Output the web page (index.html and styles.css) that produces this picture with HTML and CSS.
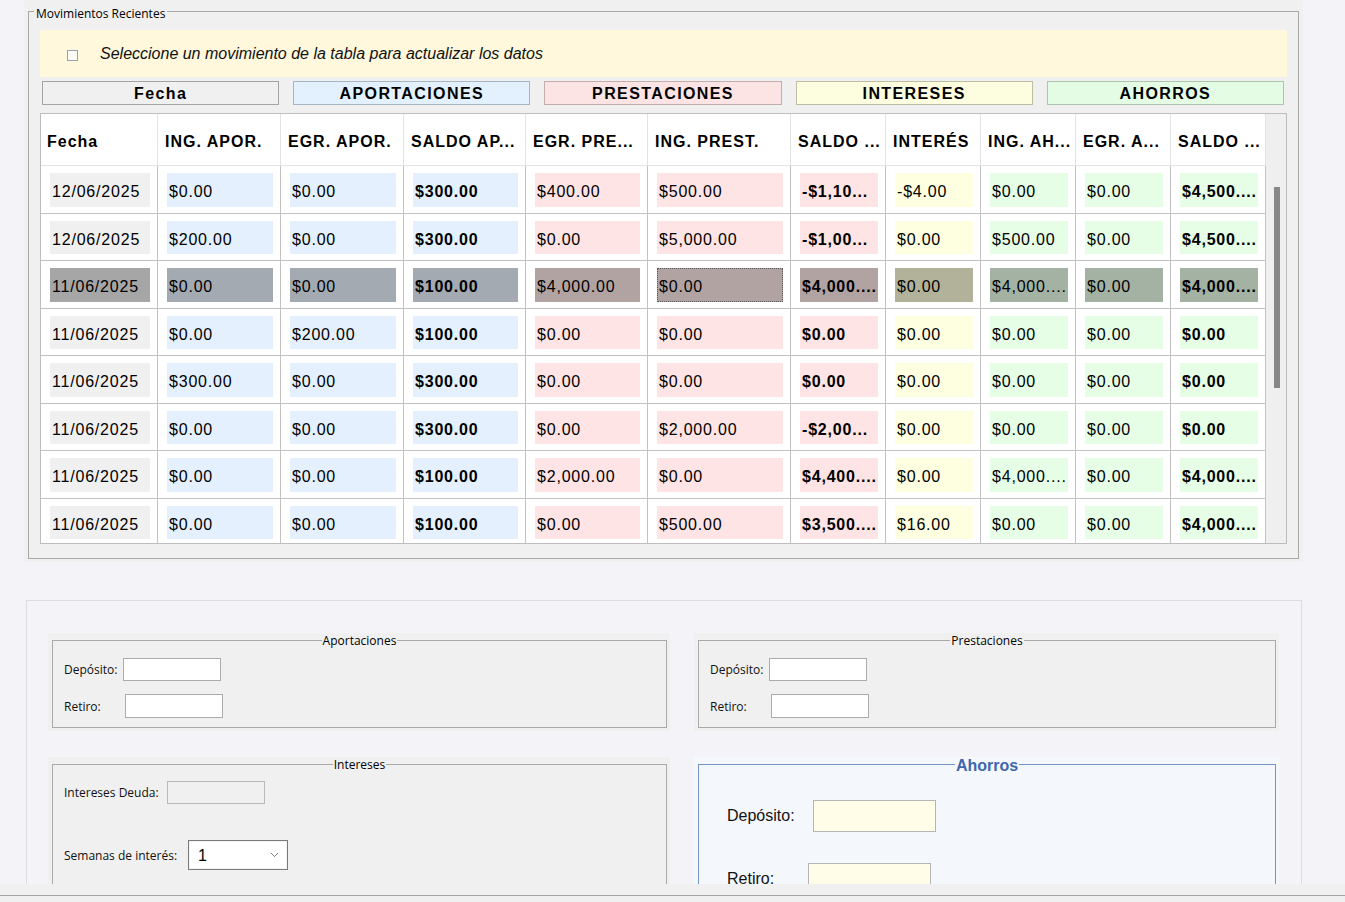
FILE: index.html
```html
<!DOCTYPE html>
<html lang="es">
<head>
<meta charset="utf-8">
<title>Movimientos</title>
<link rel="stylesheet" href="styles.css">
</head>
<body>
<div class="page">
  <section class="recent-panel">
    <fieldset class="recent">
      <legend class="recent-legend">Movimientos Recientes</legend>
      <div class="info">
        <span class="chk"></span>
        <span class="info-text">Seleccione un movimiento de la tabla para actualizar los datos</span>
      </div>
      <div class="groups">
        <div class="grp grp-f">Fecha</div>
        <div class="grp grp-a">APORTACIONES</div>
        <div class="grp grp-p">PRESTACIONES</div>
        <div class="grp grp-i">INTERESES</div>
        <div class="grp grp-h">AHORROS</div>
      </div>
      <div class="table-wrap">
        <div class="tscroll">
          <table class="grid-table">
            <colgroup>
              <col class="w117"><col class="w123"><col class="w123"><col class="w122"><col class="w122"><col class="w143"><col class="w95"><col class="w95"><col class="w95"><col class="w95"><col class="w95">
            </colgroup>
            <thead>
              <tr>
                <th>Fecha</th><th>ING. APOR.</th><th>EGR. APOR.</th><th>SALDO AP...</th><th>EGR. PRE...</th><th>ING. PREST.</th><th>SALDO ...</th><th>INTERÉS</th><th>ING. AH...</th><th>EGR. A...</th><th>SALDO ...</th>
              </tr>
            </thead>
            <tbody>
              <tr>
                <td><div class="c f">12/06/2025</div></td><td><div class="c a">$0.00</div></td><td><div class="c a">$0.00</div></td><td><div class="c a b">$300.00</div></td><td><div class="c p">$400.00</div></td><td><div class="c p">$500.00</div></td><td><div class="c p b">-$1,10...</div></td><td><div class="c i">-$4.00</div></td><td><div class="c h">$0.00</div></td><td><div class="c h">$0.00</div></td><td><div class="c h b">$4,500....</div></td>
              </tr>
              <tr>
                <td><div class="c f">12/06/2025</div></td><td><div class="c a">$200.00</div></td><td><div class="c a">$0.00</div></td><td><div class="c a b">$300.00</div></td><td><div class="c p">$0.00</div></td><td><div class="c p">$5,000.00</div></td><td><div class="c p b">-$1,00...</div></td><td><div class="c i">$0.00</div></td><td><div class="c h">$500.00</div></td><td><div class="c h">$0.00</div></td><td><div class="c h b">$4,500....</div></td>
              </tr>
              <tr class="sel">
                <td><div class="c f">11/06/2025</div></td><td><div class="c a">$0.00</div></td><td><div class="c a">$0.00</div></td><td><div class="c a b">$100.00</div></td><td><div class="c p">$4,000.00</div></td><td><div class="c p focus">$0.00</div></td><td><div class="c p b">$4,000....</div></td><td><div class="c i">$0.00</div></td><td><div class="c h">$4,000....</div></td><td><div class="c h">$0.00</div></td><td><div class="c h b">$4,000....</div></td>
              </tr>
              <tr>
                <td><div class="c f">11/06/2025</div></td><td><div class="c a">$0.00</div></td><td><div class="c a">$200.00</div></td><td><div class="c a b">$100.00</div></td><td><div class="c p">$0.00</div></td><td><div class="c p">$0.00</div></td><td><div class="c p b">$0.00</div></td><td><div class="c i">$0.00</div></td><td><div class="c h">$0.00</div></td><td><div class="c h">$0.00</div></td><td><div class="c h b">$0.00</div></td>
              </tr>
              <tr>
                <td><div class="c f">11/06/2025</div></td><td><div class="c a">$300.00</div></td><td><div class="c a">$0.00</div></td><td><div class="c a b">$300.00</div></td><td><div class="c p">$0.00</div></td><td><div class="c p">$0.00</div></td><td><div class="c p b">$0.00</div></td><td><div class="c i">$0.00</div></td><td><div class="c h">$0.00</div></td><td><div class="c h">$0.00</div></td><td><div class="c h b">$0.00</div></td>
              </tr>
              <tr>
                <td><div class="c f">11/06/2025</div></td><td><div class="c a">$0.00</div></td><td><div class="c a">$0.00</div></td><td><div class="c a b">$300.00</div></td><td><div class="c p">$0.00</div></td><td><div class="c p">$2,000.00</div></td><td><div class="c p b">-$2,00...</div></td><td><div class="c i">$0.00</div></td><td><div class="c h">$0.00</div></td><td><div class="c h">$0.00</div></td><td><div class="c h b">$0.00</div></td>
              </tr>
              <tr>
                <td><div class="c f">11/06/2025</div></td><td><div class="c a">$0.00</div></td><td><div class="c a">$0.00</div></td><td><div class="c a b">$100.00</div></td><td><div class="c p">$2,000.00</div></td><td><div class="c p">$0.00</div></td><td><div class="c p b">$4,400....</div></td><td><div class="c i">$0.00</div></td><td><div class="c h">$4,000....</div></td><td><div class="c h">$0.00</div></td><td><div class="c h b">$4,000....</div></td>
              </tr>
              <tr>
                <td><div class="c f">11/06/2025</div></td><td><div class="c a">$0.00</div></td><td><div class="c a">$0.00</div></td><td><div class="c a b">$100.00</div></td><td><div class="c p">$0.00</div></td><td><div class="c p">$500.00</div></td><td><div class="c p b">$3,500....</div></td><td><div class="c i">$16.00</div></td><td><div class="c h">$0.00</div></td><td><div class="c h">$0.00</div></td><td><div class="c h b">$4,000....</div></td>
              </tr>
            </tbody>
          </table>
        </div>
        <div class="vbar"><div class="thumb"></div></div>
      </div>
    </fieldset>
  </section>

  <section class="forms">
    <div class="forms-grid">
      <div class="box">
        <fieldset class="fs fs-row1">
          <legend class="fs-legend">Aportaciones</legend>
          <div class="frow">
            <label class="lbl lbl-dep">Depósito:</label>
            <span class="inp inp-h23"></span>
          </div>
          <div class="frow frow-gap13">
            <label class="lbl lbl-ret">Retiro:</label>
            <span class="inp inp-h24"></span>
          </div>
        </fieldset>
      </div>
      <div class="box">
        <fieldset class="fs fs-row1">
          <legend class="fs-legend">Prestaciones</legend>
          <div class="frow">
            <label class="lbl lbl-dep">Depósito:</label>
            <span class="inp inp-h23"></span>
          </div>
          <div class="frow frow-gap13">
            <label class="lbl lbl-ret">Retiro:</label>
            <span class="inp inp-h24"></span>
          </div>
        </fieldset>
      </div>
      <div class="box">
        <fieldset class="fs fs-int">
          <legend class="fs-legend">Intereses</legend>
          <div class="frow">
            <label class="lbl lbl-deuda">Intereses Deuda:</label>
            <span class="inp inp-h23 inp-disabled"></span>
          </div>
          <div class="frow frow-gap36">
            <label class="lbl lbl-sem">Semanas de interés:</label>
            <div class="select">
              <span class="select-val">1</span>
              <svg class="chev" width="9" height="6" viewBox="0 0 9 6"><path d="M0.8 0.8 L4.5 4.6 L8.2 0.8" fill="none" stroke="#7a7a7a" stroke-width="1"/></svg>
            </div>
          </div>
        </fieldset>
      </div>
      <div class="box box-blue">
        <fieldset class="fs fs-blue">
          <legend class="fs-legend legend-blue">Ahorros</legend>
          <div class="blue-body">
            <div class="frow">
              <label class="lbl-big lbl-big-dep">Depósito:</label>
              <span class="inp-big"></span>
            </div>
            <div class="frow frow-gap31">
              <label class="lbl-big lbl-big-ret">Retiro:</label>
              <span class="inp-big"></span>
            </div>
          </div>
        </fieldset>
      </div>
    </div>
  </section>

  <div class="statusbar"><div class="statusbar-line"></div></div>
</div>
</body>
</html>
```
FILE: styles.css
```css
* { box-sizing: border-box; }
html, body { margin: 0; padding: 0; }
body {
  background: #f4f4f8;
  font-family: "Liberation Sans", Arial, sans-serif;
  color: #000;
}
.page {
  width: 1345px;
  height: 902px;
  display: flex;
  flex-direction: column;
  overflow: hidden;
}

/* ---------- top panel ---------- */
.recent-panel {
  flex: none;
  margin-left: 24px;
  width: 1279px;
  height: 562px;
  background: #f0f0f0;
  padding: 2px 4px 0 4px;
}
.recent {
  margin: 0;
  height: 557px;
  border: 1px solid #a8a8a8;
  padding: 9px 11px 0 11px;
  min-width: 0;
}
.recent-legend {
  font-family: "Open Sans", "Liberation Sans", sans-serif;
  font-size: 12px;
  line-height: 14px;
  padding: 5px 2px 0 2px;
  margin-left: -6px;
  color: #000;
}
.info {
  height: 47px;
  background: #fff8dc;
  display: flex;
  align-items: center;
  padding-left: 27px;
}
.chk {
  width: 11px;
  height: 11px;
  border: 1px solid #97a3b4;
  background: #fbfaf4;
  margin-top: 3px;
}
.info-text {
  margin-left: 22px;
  font-style: italic;
  font-size: 16px;
  color: #111;
}
.groups {
  margin-top: 4px;
  display: grid;
  grid-template-columns: repeat(5, 1fr);
  column-gap: 14px;
  padding: 0 3px 0 2px;
}
.grp {
  height: 24px;
  border: 1px solid #a0a0a0;
  text-align: center;
  font-weight: bold;
  font-size: 16px;
  letter-spacing: 1.4px;
  line-height: 23px;
}
.grp-f { background: #f0f0f0; border-color: #a4a4a4; }
.grp-a { background: #e3f0fd; border-color: #a6b5c4; }
.grp-p { background: #fde4e4; border-color: #c4adad; }
.grp-i { background: #fdfddf; border-color: #bdbda2; }
.grp-h { background: #e4fce4; border-color: #adc4ad; }

/* ---------- table ---------- */
.table-wrap {
  margin-top: 8px;
  height: 431px;
  border: 1px solid #bdbdbd;
  display: flex;
  background: #fff;
}
.tscroll {
  flex: none;
  width: 1225px;
  overflow: hidden;
}
.vbar {
  flex: 1;
  background: #efefef;
  padding: 73px 0 0 8px;
}
.thumb {
  width: 6px;
  height: 201px;
  background: #878787;
}
.grid-table {
  table-layout: fixed;
  width: 1225px;
  border-collapse: separate;
  border-spacing: 0;
}
.w117 { width: 117px; }
.w123 { width: 123px; }
.w122 { width: 122px; }
.w143 { width: 143px; }
.w95 { width: 95px; }
.grid-table th {
  height: 52px;
  padding: 4px 0 0 7px;
  text-align: left;
  font-weight: bold;
  font-size: 16px;
  letter-spacing: 1px;
  white-space: nowrap;
  overflow: hidden;
  background: #fff;
  border-right: 1px solid #e3e3e3;
  border-bottom: 1px solid #e3e3e3;
}
.grid-table th:first-child { padding-left: 6px; }
.grid-table td {
  padding: 7px 7px 6px 9px;
  border-right: 1px solid #c2c2c2;
  border-bottom: 1px solid #c2c2c2;
  background: #fff;
}
.c {
  height: 33.5px;
  padding-top: 4px;
  line-height: 29.5px;
  padding-left: 2px;
  font-size: 16px;
  letter-spacing: 0.8px;
  white-space: nowrap;
  overflow: hidden;
}
.c.b { font-weight: bold; }
.f { background: #f0f0f0; }
.a { background: #e4f0fe; }
.p { background: #fee4e4; }
.i { background: #fefee0; }
.h { background: #e6fee6; }
.sel .f { background: #a6a6a6; }
.sel .a { background: #a3aab2; }
.sel .p { background: #b2a3a3; }
.sel .i { background: #b2b29a; }
.sel .h { background: #a3b2a3; }
.focus { border: 1px dotted #555; padding-left: 1px; padding-top: 3px; }

/* ---------- forms ---------- */
.forms {
  flex: 1;
  min-height: 0;
  overflow: hidden;
  margin: 38px 0 0 26px;
  width: 1276px;
  border: 1px solid #dcdce3;
  border-bottom: none;
  padding: 32px 22px 0 21px;
}
.forms-grid {
  display: grid;
  grid-template-columns: 622px 585px;
  grid-template-rows: 98px auto;
  column-gap: 24px;
  row-gap: 26px;
}
.box {
  background: #f0f0f0;
  padding: 0 3px 3px 4px;
}
.box-blue { background: #f4f8fd; }
.fs {
  margin: 0;
  min-width: 0;
  border: 1px solid #a9a9a9;
  padding: 11px 11px 10px 11px;
  font-family: "Open Sans", "Liberation Sans", sans-serif;
  font-size: 12px;
}
.fs-row1 { height: 95px; }
.fs-int { height: 200px; padding-top: 10px; }
.fs-blue {
  height: 200px;
  border-color: #7493c9;
  padding: 29px 11px 10px 11px;
}
.blue-body { padding-left: 17px; }
.fs-legend {
  margin: 0 auto;
  padding: 1px 1px 0 1px;
  font-size: 12px;
  line-height: 13px;
  color: #000;
}
.legend-blue {
  font-family: "Liberation Sans", Arial, sans-serif;
  font-weight: bold;
  font-size: 16px;
  line-height: 10px;
  padding: 4px 1px 0 1px;
  color: #4066ad;
}
.frow {
  display: flex;
  align-items: center;
}
.frow-gap13 { margin-top: 13px; }
.frow-gap36 { margin-top: 36px; }
.frow-gap31 { margin-top: 31px; }
.lbl { color: #111; }
.lbl-dep { width: 59px; }
.lbl-ret { width: 61px; }
.lbl-deuda { width: 103px; }
.lbl-sem { width: 124px; }
.inp {
  display: block;
  width: 98px;
  background: #fff;
  border: 1px solid #acacac;
}
.inp-h23 { height: 23px; }
.inp-h24 { height: 24px; }
.inp-disabled { background: #f0f0f0; border-color: #b9b9b9; }
.select {
  width: 100px;
  height: 30px;
  background: #fff;
  border: 1px solid #7a7a7a;
  box-shadow: inset 0 0 0 1px #f4f4f4;
  display: flex;
  align-items: center;
  justify-content: space-between;
  padding: 0 8px 0 9px;
}
.select-val {
  font-family: "Liberation Sans", Arial, sans-serif;
  font-size: 16px;
  padding-top: 2px;
}
.chev { display: block; }
.lbl-big {
  font-family: "Liberation Sans", Arial, sans-serif;
  font-size: 16px;
  color: #111;
}
.lbl-big-dep { width: 86px; }
.lbl-big-ret { width: 81px; }
.inp-big {
  display: block;
  width: 123px;
  height: 32px;
  background: #fffde7;
  border: 1px solid #b5b5b5;
}

/* ---------- status bar ---------- */
.statusbar {
  flex: none;
  height: 18px;
  background: #f0f0f0;
}
.statusbar-line {
  height: 12px;
  border-bottom: 1px solid #a3a3a3;
}
```
